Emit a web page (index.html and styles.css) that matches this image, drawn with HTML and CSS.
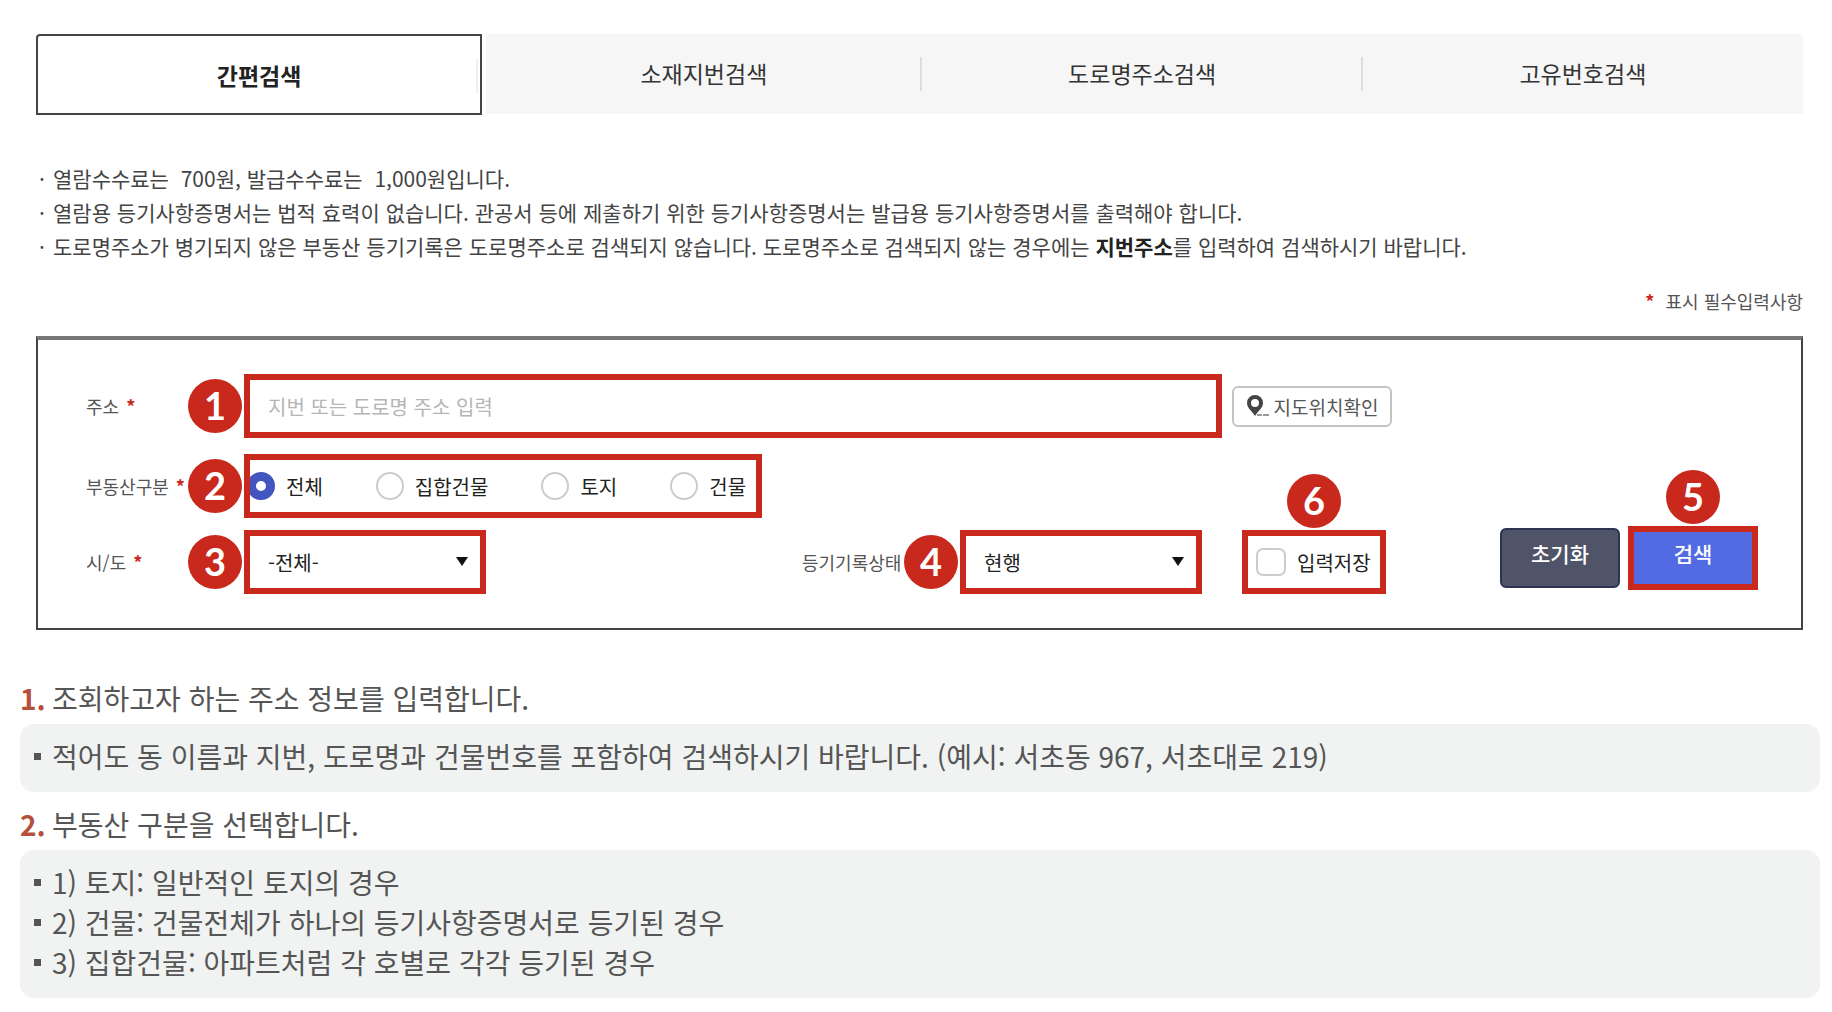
FILE: index.html
```
<!DOCTYPE html>
<html lang="ko">
<head>
  <meta charset="UTF-8" />
  <meta name="viewport" content="width=device-width, initial-scale=1.0"/>
  <title>부동산 간편검색 안내</title>
  <link rel="stylesheet" href="styles.css">
</head>
<body>
  <main class="search">
    <nav class="tabs">
      <a href="#" class="tab active">간편검색</a>
      <a href="#" class="tab">소재지번검색</a>
      <a href="#" class="tab">도로명주소검색</a>
      <a href="#" class="tab">고유번호검색</a>
    </nav>

    <ul class="notice">
      <li>열람수수료는&nbsp; 700원, 발급수수료는&nbsp; 1,000원입니다.</li>
      <li>열람용 등기사항증명서는 법적 효력이 없습니다. 관공서 등에 제출하기 위한 등기사항증명서는 발급용 등기사항증명서를 출력해야 합니다.</li>
      <li>도로명주소가 병기되지 않은 부동산 등기기록은 도로명주소로 검색되지 않습니다. 도로명주소로 검색되지 않는 경우에는 <strong>지번주소</strong>를 입력하여 검색하시기 바랍니다.</li>
    </ul>

    <p class="required-note"><span class="star">*</span> 표시 필수입력사항</p>

    <form class="panel">
      <div class="row">
        <label class="name" for="address">주소 <span class="star">*</span></label>
        <span class="badge">1</span>
        <div class="mark mark-address">
          <input type="text" id="address" placeholder="지번 또는 도로명 주소 입력">
        </div>
        <button type="button" class="btn-map">
          <svg width="24" height="24" viewBox="0 0 24 24" aria-hidden="true">
            <path fill="#444" fill-rule="evenodd" d="M9 1a8 8 0 0 0-8 8c0 5 5 8 8 13 3-5 8-8 8-13a8 8 0 0 0-8-8zm0 4a4 4 0 1 1 0 8 4 4 0 0 1 0-8z"/>
            <path stroke="#999" stroke-width="2" d="M11 21h5M17 21h6"/>
          </svg>
          지도위치확인
        </button>
      </div>

      <div class="row row-type">
        <span class="name" id="typeLabel">부동산구분 <span class="star">*</span></span>
        <span class="badge">2</span>
        <div class="mark mark-type" role="radiogroup" aria-labelledby="typeLabel">
          <label><input type="radio" name="type" checked>전체</label>
          <label><input type="radio" name="type">집합건물</label>
          <label><input type="radio" name="type">토지</label>
          <label><input type="radio" name="type">건물</label>
        </div>
      </div>

      <div class="row row-last">
        <div class="field field-sido">
          <label class="name" for="sido">시/도 <span class="star">*</span></label>
          <span class="badge">3</span>
          <div class="mark mark-select">
            <select id="sido">
              <option>-전체-</option>
            </select>
          </div>
        </div>

        <div class="field">
          <label class="name" for="state">등기기록상태</label>
          <span class="badge">4</span>
          <div class="mark mark-select">
            <select id="state">
              <option>현행</option>
            </select>
          </div>
        </div>

        <div class="mark mark-save">
          <span class="badge badge-top">6</span>
          <label><input type="checkbox">입력저장</label>
        </div>

        <div class="actions">
          <button type="reset" class="btn-reset">초기화</button>
          <div class="mark mark-submit">
            <span class="badge badge-top">5</span>
            <button type="submit" class="btn-submit">검색</button>
          </div>
        </div>
      </div>
    </form>
  </main>

  <section class="guide">
    <h2><b>1.</b> 조회하고자 하는 주소 정보를 입력합니다.</h2>
    <ul>
      <li>적어도 동 이름과 지번, 도로명과 건물번호를 포함하여 검색하시기 바랍니다. (예시: 서초동 967, 서초대로 219)</li>
    </ul>

    <h2><b>2.</b> 부동산 구분을 선택합니다.</h2>
    <ul>
      <li>1) 토지: 일반적인 토지의 경우</li>
      <li>2) 건물: 건물전체가 하나의 등기사항증명서로 등기된 경우</li>
      <li>3) 집합건물: 아파트처럼 각 호별로 각각 등기된 경우</li>
    </ul>
  </section>
</body>
</html>
```
FILE: styles.css
```
* {
  box-sizing: border-box;
}

body {
  margin: 0;
  font-family: 'Noto Sans CJK KR', sans-serif;
  color: #444;
  background: #fff;
}

input, select, button {
  font-family: inherit;
  margin: 0;
}

ul {
  list-style: none;
  margin: 0;
  padding: 0;
}

.search {
  padding: 34px 29px 0 36px;
}

/* tabs */
.tabs {
  display: grid;
  grid-template-columns: 450fr 435fr 441fr 440fr;
}

.tab {
  position: relative;
  height: 80px;
  line-height: 78px;
  font-size: 23px;
  text-align: center;
  text-decoration: none;
  color: #333;
  background: #f6f6f6;
}

.tab:not(:last-child)::after {
  content: '';
  position: absolute;
  top: 23px;
  right: 0;
  width: 2px;
  height: 34px;
  background: #ddd;
}

.tab.active {
  height: 81px;
  margin-right: 4px;
  font-weight: 700;
  color: #222;
  background: #fff;
  border: 2px solid #444;
  border-radius: 4px 0 0 0;
}

.tab.active::after {
  right: 2px;
  background: #eee;
}

.tab:last-child {
  border-radius: 0 4px 0 0;
}

/* notice */
.notice {
  margin-top: 46px;
  padding-left: 3px;
  font-size: 21px;
  line-height: 34px;
}

.notice li {
  display: flex;
  white-space: pre-wrap;
}

.notice li::before {
  content: '·';
  flex: 0 0 14px;
}

.notice strong {
  color: #222;
}

.star {
  color: #c8291c;
  font-weight: 700;
}

.required-note {
  margin: 24px 0 0;
  font-size: 18px;
  line-height: 28px;
  text-align: right;
  color: #555;
}

.required-note .star {
  margin-right: 6px;
}

/* search form */
.panel {
  margin-top: 21px;
  padding: 34px 43px 34px 48px;
  border: 2px solid #444;
  border-top: 4px solid #777;
}

.row {
  display: flex;
  align-items: center;
}

.row-type {
  margin-top: 16px;
}

.row-last {
  margin-top: 12px;
}

.field {
  display: flex;
  align-items: center;
}

.field-sido {
  flex: 1;
}

.name {
  flex: 0 0 102px;
  font-size: 18px;
  white-space: nowrap;
  color: #555;
}

.name .star {
  margin-left: 2px;
}

.badge {
  flex: 0 0 54px;
  width: 54px;
  height: 54px;
  margin-right: 2px;
  border-radius: 50%;
  background: #c8291c;
  color: #fff;
  font-family: Lato, sans-serif;
  font-size: 38px;
  font-weight: 700;
  line-height: 52px;
  text-align: center;
}

.badge-top {
  position: absolute;
  bottom: 100%;
  left: 50%;
  margin: 0 0 8px -27px;
}

.mark {
  position: relative;
  height: 64px;
  border: 6px solid #c8291c;
  font-size: 20px;
  color: #222;
}

.mark-address {
  flex: 0 1 978px;
}

.mark-address input {
  width: 100%;
  height: 100%;
  padding: 0 18px;
  border: none;
  font-size: 20px;
  color: #222;
}

.mark-address input::placeholder {
  color: #b5b5b5;
}

.btn-map {
  display: flex;
  align-items: center;
  justify-content: center;
  gap: 4px;
  width: 160px;
  height: 41px;
  margin-left: 10px;
  padding: 0;
  border: 2px solid #c4c4c4;
  border-radius: 6px;
  background: #fff;
  font-size: 19px;
  white-space: nowrap;
  color: #555;
}

.mark label {
  display: flex;
  align-items: center;
  gap: 11px;
  white-space: nowrap;
}

.mark-type {
  display: flex;
  gap: 53px;
  width: 518px;
  overflow: hidden;
}

.mark-type label:first-child {
  margin-left: -3px;
}

.mark-type input {
  appearance: none;
  width: 28px;
  height: 28px;
  border: 2px solid #ccc;
  border-radius: 50%;
  background: #fff;
}

.mark-type input:checked {
  border: 9px solid #4356c0;
}

.mark-select {
  width: 242px;
}

.mark-select select {
  appearance: none;
  width: 100%;
  height: 100%;
  padding: 0 18px;
  border: none;
  background: #fff;
  font-size: 20px;
  color: #222;
}

.mark-select::after {
  content: '';
  position: absolute;
  top: 21px;
  right: 12px;
  border: 6px solid transparent;
  border-top: 9px solid #111;
  border-bottom: 0;
}

.mark-save {
  display: flex;
  width: 144px;
  margin-left: 40px;
  padding-left: 8px;
}

.mark-save input {
  appearance: none;
  width: 30px;
  height: 28px;
  border: 2px solid #ccc;
  border-radius: 7px;
  background: #fff;
}

.actions {
  display: flex;
  align-items: center;
  align-self: flex-start;
  gap: 8px;
  margin: -4px 0 0 114px;
}

.btn-reset,
.btn-submit {
  padding: 0 0 10px;
  font-size: 21px;
  font-weight: 500;
  color: #fff;
}

.btn-reset {
  width: 120px;
  height: 60px;
  border: 2px solid #2c3452;
  border-radius: 6px;
  background: #505469;
}

.mark-submit {
  width: 130px;
}

.btn-submit {
  width: 100%;
  height: 100%;
  border: none;
  background: #526be2;
}

/* guide */
.guide {
  padding: 48px 12px 14px 20px;
  font-size: 28px;
  line-height: 40px;
  color: #555;
}

.guide h2 {
  display: flex;
  margin: 0 0 6px;
  font-size: 28px;
  font-weight: 400;
}

.guide h2 b {
  flex: 0 0 32px;
  color: #b5503c;
}

.guide ul {
  padding: 12px 14px 16px;
  border-radius: 14px;
  background: #f0f3f2;
}

.guide ul + h2 {
  margin-top: 12px;
}

.guide li {
  display: flex;
  align-items: center;
}

.guide li::before {
  content: '';
  flex: 0 0 7px;
  height: 7px;
  margin-right: 11px;
  background: #555;
}
```
